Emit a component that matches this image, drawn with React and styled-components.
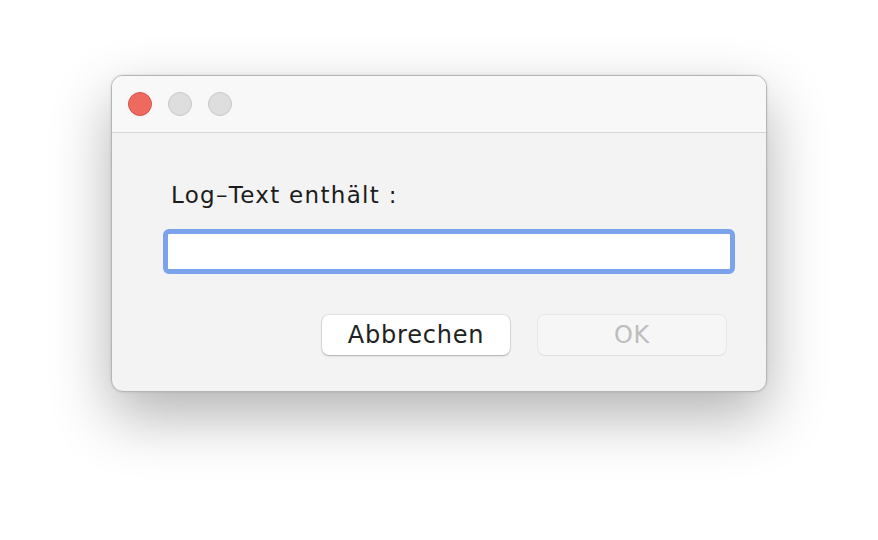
import React, { useState } from 'react';
import styled, { createGlobalStyle } from 'styled-components';

const GlobalStyle = createGlobalStyle`
  html, body {
    margin: 0;
    padding: 0;
    background: #ffffff;
    font-family: 'DejaVu Sans', 'Liberation Sans', sans-serif;
  }
`;

const Stage = styled.div`
  width: 878px;
  height: 540px;
  display: flex;
  justify-content: flex-start;
  align-items: flex-start;
  padding: 75px 0 0 111px;
  box-sizing: border-box;
`;

const Window = styled.div`
  width: 656px;
  height: 317px;
  background: #f3f3f3;
  border: 1px solid #b5b5b5;
  border-radius: 12px;
  box-sizing: border-box;
  overflow: hidden;
  box-shadow: 0 24px 60px rgba(0, 0, 0, 0.3), 0 0 3px rgba(0, 0, 0, 0.12);
  display: flex;
  flex-direction: column;
`;

const TitleBar = styled.div`
  height: 56px;
  flex-shrink: 0;
  background: #f8f8f8;
  border-bottom: 1px solid #d6d6d6;
  display: flex;
  align-items: center;
  gap: 16px;
  padding-left: 16px;
`;

const Light = styled.span`
  width: 24px;
  height: 24px;
  border-radius: 50%;
  box-sizing: border-box;
  background: ${p => (p.red ? '#ee6a5e' : '#dedede')};
  border: 1px solid ${p => (p.red ? '#d5554a' : '#c8c8c8')};
`;

const Body = styled.div`
  flex: 1;
  display: flex;
  flex-direction: column;
  padding: 48px 31px 0 51px;
`;

const Label = styled.label`
  font-family: 'DejaVu Sans', sans-serif;
  font-size: 23px;
  letter-spacing: 1.3px;
  color: #1b1b1b;
  margin-left: 8px;
  line-height: 28px;
`;

const Input = styled.input`
  margin-top: 20px;
  height: 45px;
  flex-shrink: 0;
  width: 100%;
  box-sizing: border-box;
  border: 5px solid #7ba3ec;
  border-radius: 6px;
  background: #ffffff;
  outline: none;
  font-size: 18px;
  padding: 0 6px;
  font-family: inherit;
`;

const Actions = styled.div`
  display: flex;
  justify-content: flex-end;
  gap: 28px;
  margin-top: 41px;
  padding-right: 9px;
`;

const Button = styled.button`
  width: 188px;
  height: 40px;
  flex-shrink: 0;
  border-radius: 7px;
  border: none;
  font-family: 'DejaVu Sans', sans-serif;
  font-size: 24px;
  letter-spacing: 0.8px;
  padding: 0;
  background: ${p => (p.disabled ? '#f6f6f6' : '#ffffff')};
  color: ${p => (p.disabled ? '#bdbdbd' : '#222222')};
  box-shadow: ${p =>
    p.disabled
      ? '0 0 0 1px rgba(0,0,0,0.04), 0 1px 1px rgba(0,0,0,0.05)'
      : '0 0 0 1px rgba(0,0,0,0.07), 0 1px 2px rgba(0,0,0,0.22)'};
`;

export default function App() {
  const [value, setValue] = useState('');
  return (
    <>
      <GlobalStyle />
      <Stage>
        <Window>
          <TitleBar>
            <Light red />
            <Light />
            <Light />
          </TitleBar>
          <Body>
            <Label>Log–Text enthält :</Label>
            <Input value={value} onChange={e => setValue(e.target.value)} />
            <Actions>
              <Button>Abbrechen</Button>
              <Button disabled={!value}>OK</Button>
            </Actions>
          </Body>
        </Window>
      </Stage>
    </>
  );
}
